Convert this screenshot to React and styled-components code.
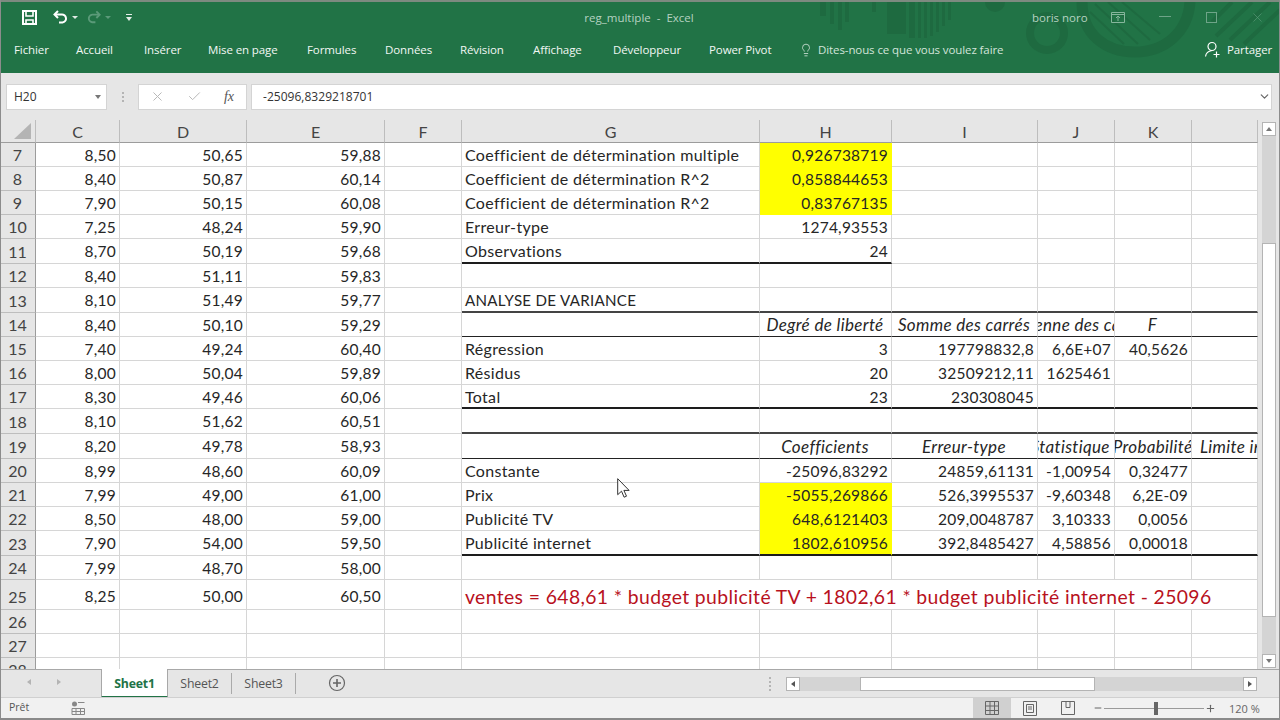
import React from 'react';
import styled, { createGlobalStyle } from 'styled-components';
import { Lightbulb, X, Check, ChevronDown, Plus, Minus } from 'lucide-react';

const Global = createGlobalStyle`
  html, body { margin: 0; padding: 0; background: #e6e6e6; }
  #root { width: 1280px; height: 720px; overflow: hidden; }
  * { box-sizing: border-box; }
`;

const UI = `"Open Sans", "Noto Sans", "Liberation Sans", sans-serif`;
const SHEET = `Lato, "Open Sans", "Liberation Sans", sans-serif`;
const COLS = '36px 84px 127px 138px 77px 298px 132px 146px 77px 77px 66px';

const Page = styled.div`
  position: relative; width: 1280px; height: 720px; display: flex; flex-direction: column;
  background: #e6e6e6; overflow: hidden; border-left: 1px solid #8c8c8c; border-right: 1px solid #8c8c8c;
  border-bottom: 2px solid #8a8a8a; font-family: ${UI};
`;
const Ribbon = styled.header`
  position: relative; height: 73px; flex: none; background: #217346; color: #fff;
  border-top: 2px solid #7d8a80; margin-left: -1px; overflow: hidden;
`;
const Art = styled.svg`position: absolute; left: 0; top: 0; pointer-events: none;`;
const TitleRow = styled.div`
  position: relative; height: 30px; display: flex; align-items: center; padding-left: 21px;
`;
const Quick = styled.div`display: flex; align-items: center; width: 493px; flex: none;`;
const QuickIcon = styled.svg`display: block; flex: none; margin-right: ${p => p.$mr || 0}px;`;
const DocTitle = styled.div`
  width: 250px; flex: none; text-align: center; font-size: 11.5px; color: #b5d2c1; white-space: nowrap;
`;
const User = styled.div`
  margin-left: 268px; font-size: 11.5px; color: #b5d2c1; white-space: nowrap; width: 72px; flex: none;
`;
const WinButtons = styled.div`display: flex; align-items: center; flex: none; color: #6ea488;`;
const WinBtn = styled.div`width: ${p => p.$w}px; flex: none; display: flex; justify-content: center; align-items: center;`;
const TabRow = styled.nav`
  position: relative; height: 41px; padding: 0 0 6px 14px; display: flex; align-items: center;
`;
const Tab = styled.div`
  width: ${p => p.$w}px; flex: none; font-size: 11.5px; letter-spacing: -0.1px; color: #f2f7f4; white-space: nowrap;
`;
const Tell = styled.div`
  display: flex; align-items: center; gap: 5px; width: 405px; flex: none; font-size: 11.5px; letter-spacing: -0.1px;
  color: #d3e4da; margin-left: -2px; white-space: nowrap;
`;
const Share = styled.div`
  display: flex; align-items: center; gap: 6px; font-size: 11.5px; letter-spacing: -0.1px; color: #f2f7f4; flex: none;
`;

const FormulaBar = styled.div`
  height: 47px; flex: none; display: flex; align-items: center; padding: 1px 7px 1px 5px; background: #e6e6e6;
`;
const NameBox = styled.div`
  width: 101px; height: 26px; flex: none; background: #fff; border: 1px solid #d4d4d4; display: flex;
  align-items: center; justify-content: space-between; padding: 0 5px 0 7px; font-size: 12px; color: #333;
`;
const Caret = styled.span`
  width: 0; height: 0; border-left: 3.5px solid transparent; border-right: 3.5px solid transparent;
  border-top: 4px solid #777;
`;
const Grip = styled.div`
  width: 31px; flex: none; display: flex; flex-direction: column; align-items: center; gap: 2px;
`;
const GripDot = styled.span`width: 2px; height: 2px; background: #b4b4b4;`;
const FxBox = styled.div`
  width: 109px; height: 26px; flex: none; background: #fff; border: 1px solid #d4d4d4; display: flex;
  align-items: center; justify-content: space-between; padding: 0 12px 0 11px; color: #b9b9b9;
`;
const FxLabel = styled.span`
  font-family: "Liberation Serif", serif; font-style: italic; font-size: 14px; color: #555;
`;
const Input = styled.div`
  flex: 1; height: 26px; margin-left: 4px; background: #fff; border: 1px solid #d4d4d4; display: flex;
  align-items: center; justify-content: space-between; padding: 0 0 0 11px; font-size: 12px; letter-spacing: 0.03px; color: #333;
`;

const Workspace = styled.div`height: 549px; flex: none; display: flex; margin-left: -1px;`;
const Sheet = styled.div`width: 1258px; flex: none; height: 549px; overflow: hidden; background: #fff;`;
const Row = styled.div`
  display: grid; grid-template-columns: ${COLS}; height: ${p => p.$h}px;
`;
const ColHead = styled.div`
  background: #e6e6e6; border-right: 1px solid #bdbdbd; border-bottom: 1px solid #9c9c9c;
  display: flex; align-items: center; justify-content: center; font: 400 16px ${SHEET}; color: #444; position: relative;
`;
const Corner = styled.svg`position: absolute; right: 4px; bottom: 3px;`;
const RowHead = styled.div`
  background: #e6e6e6; border-right: 1px solid #9c9c9c; border-bottom: 1px solid #bdbdbd;
  display: flex; align-items: center; justify-content: center; padding-top: ${p => p.$low ? 3 : 0}px;
  font: 400 16px ${SHEET}; color: #444;
`;
const lines = {
  thin: '1px solid #222',
  thick: '2px solid #1d1d1d',
  heavy: '2px solid #1d1d1d',
  soft: '2px solid #444',
};
const Cell = styled.div`
  min-width: 0; overflow: hidden; white-space: nowrap; display: flex; align-items: center;
  justify-content: ${p => p.$align === 'right' ? 'flex-end' : p.$align === 'center' ? 'center' : 'flex-start'};
  padding: ${p => p.$low ? 3 : (p.$edge === 'heavy' || p.$edge === 'soft') ? 1 : 0}px ${p => p.$align === 'center' ? 4 : 3}px 0 ${p => p.$pl ?? 3}px;
  font: ${p => p.$italic ? 'italic' : 'normal'} 400 ${p => p.$size || 15.5}px ${SHEET};
  letter-spacing: ${p => p.$size ? '0.02em' : '0.015em'};
  color: ${p => p.$color || '#262626'};
  background: ${p => p.$fill || '#fff'};
  border-right: 1px solid ${p => p.$fill || '#d6d6d6'};
  border-bottom: ${p => p.$edge ? lines[p.$edge] : `1px solid ${p.$fill || '#d6d6d6'}`};
  grid-column: ${p => p.$span ? `span ${p.$span}` : 'auto'};
`;
const Inner = styled.span`flex: none;`;

const VScroll = styled.div`
  width: 21px; height: 549px; flex: none; padding: 2px 3px 1px 4px; background: #e6e6e6; display: flex; flex-direction: column;
`;
const Track = styled.div`flex: 1; background: #d4d4d4; display: flex; flex-direction: column;`;
const ArrowBtn = styled.div`
  width: 14px; height: 14px; flex: none; margin-top: ${p => p.$mt || 0}px; background: #fff; border: 1px solid #b4b4b4;
  display: flex; align-items: center; justify-content: center;
`;
const ArrowUp = styled.span`
  width: 0; height: 0; border-left: 3.5px solid transparent; border-right: 3.5px solid transparent;
  ${p => p.$down ? 'border-top: 4px solid #777;' : 'border-bottom: 4px solid #777;'}
`;
const ArrowSide = styled.span`
  width: 0; height: 0; border-top: 3.5px solid transparent; border-bottom: 3.5px solid transparent;
  ${p => p.$right ? 'border-left: 4px solid #555;' : 'border-right: 4px solid #555;'}
`;
const VThumbGap = styled.div`height: ${p => p.$h}px; flex: none;`;
const VThumb = styled.div`height: 374px; flex: none; background: #fff; border: 1px solid #b4b4b4;`;

const TabBar = styled.div`
  height: 28px; flex: none; display: flex; align-items: flex-start; background: #e6e6e6; border-top: 1px solid #a8a8a8;
  font-size: 12.3px; margin-left: -1px; padding-left: 27px;
`;
const NavArrow = styled.div`width: 30px; height: 24px; flex: none; display: flex; align-items: center; opacity: .35;`;
const TabGap = styled.div`width: 14px; flex: none;`;
const SheetTab = styled.div`
  width: ${p => p.$w}px; flex: none; display: flex; align-items: center; justify-content: center;
  margin-top: ${p => p.$active ? -1 : 3}px; ${p => p.$active ? 'padding-top: 1px; height: 29px;' : 'height: 21px;'}
  background: ${p => p.$active ? '#fff' : 'transparent'};
  color: ${p => p.$active ? '#217346' : '#555'}; font-weight: ${p => p.$active ? 700 : 400};
  border-left: ${p => p.$active ? '1px solid #a8a8a8' : '0'};
  border-right: 1px solid ${p => p.$active ? '#a8a8a8' : '#aaa'};
  border-bottom: ${p => p.$active ? '2px solid #217346' : '0'};
  letter-spacing: -0.2px;
`;
const AddSheet = styled.svg`margin: 4px 0 0 32px; flex: none;`;
const HDots = styled.div`
  margin: 7px 0 0 423px; width: 17px; flex: none; display: flex; flex-direction: column; gap: 2px; align-items: flex-start;
`;
const HTrack = styled.div`
  margin-top: 7px; width: 443px; height: 14px; flex: none; display: flex; background: #d4d4d4;
`;
const HThumb = styled.div`width: 235px; height: 14px; flex: none; margin-left: 60px; background: #fff; border: 1px solid #b4b4b4;`;

const Status = styled.footer`
  height: 21px; flex: none; display: flex; align-items: stretch; background: #f1f1f1; border-top: 1px solid #d0d0d0;
  font-size: 10.5px; color: #555; padding-left: 8px;
`;
const Ready = styled.div`width: 62px; flex: none; display: flex; align-items: center; padding-bottom: 2px;`;
const StatIcon = styled.svg`flex: none; align-self: center; margin-bottom: 1px;`;
const Views = styled.div`margin-left: 888px; display: flex; flex: none;`;
const View = styled.div`
  width: 38px; display: flex; align-items: center; justify-content: center; background: ${p => p.$on ? '#d0d0d0' : 'transparent'};
`;
const Zoomer = styled.div`display: flex; align-items: center; color: #666; flex: none; margin-left: 6px;`;
const Slider = styled.div`position: relative; width: 100px; height: 1px; background: #9a9a9a; margin: 0 1px;`;
const Knob = styled.span`position: absolute; left: 50px; top: -6px; width: 4px; height: 13px; background: #666;`;
const ZoomPct = styled.div`margin-left: 13px; white-space: nowrap; font-size: 11px;`;

const Cursor = styled.svg`position: absolute; left: 616px; top: 478px;`;

const Y = '#ffff00';
const rows = [
  [7, 24, '8,50', '50,65', '59,88', 'Coefficient de détermination multiple', '0,926738719', Y],
  [8, 24, '8,40', '50,87', '60,14', 'Coefficient de détermination R^2', '0,858844653', Y],
  [9, 24, '7,90', '50,15', '60,08', 'Coefficient de détermination R^2', '0,83767135', Y],
  [10, 24, '7,25', '48,24', '59,90', 'Erreur-type', '1274,93553'],
  [11, 25, '8,70', '50,19', '59,68', 'Observations', '24', null, 'gh'],
  [12, 24, '8,40', '51,11', '59,83'],
  [13, 25, '8,10', '51,49', '59,77', 'ANALYSE DE VARIANCE', '', null, 'all', 'soft'],
  [14, 24, '8,40', '50,10', '59,29', '', 'Degré de liberté', null, 'all', 'thin', ['Somme des carrés', 'Moyenne des carrés', 'F', ''], true],
  [15, 24, '7,40', '49,24', '60,40', 'Régression', '3', null, null, null, ['197798832,8', '6,6E+07', '40,5626', '']],
  [16, 24, '8,00', '50,04', '59,89', 'Résidus', '20', null, null, null, ['32509212,11', '1625461', '', '']],
  [17, 24, '8,30', '49,46', '60,06', 'Total', '23', null, 'all', 'heavy', ['230308045', '', '', '']],
  [18, 25, '8,10', '51,62', '60,51', '', '', null, 'all', 'soft'],
  [19, 25, '8,20', '49,78', '58,93', '', 'Coefficients', null, 'all', 'thin', ['Erreur-type', 'Statistique t', 'Probabilité', 'Limite inférieure'], true],
  [20, 24, '8,99', '48,60', '60,09', 'Constante', '-25096,83292', null, null, null, ['24859,61131', '-1,00954', '0,32477', '']],
  [21, 24, '7,99', '49,00', '61,00', 'Prix', '-5055,269866', Y, null, null, ['526,3995537', '-9,60348', '6,2E-09', '']],
  [22, 24, '8,50', '48,00', '59,00', 'Publicité TV', '648,6121403', Y, null, null, ['209,0048787', '3,10333', '0,0056', '']],
  [23, 25, '7,90', '54,00', '59,50', 'Publicité internet', '1802,610956', Y, 'all', 'thick', ['392,8485427', '4,58856', '0,00018', '']],
  [24, 24, '7,99', '48,70', '58,00'],
];

function DataRow({ r }) {
  const [n, h, c, d, e, g = '', hv = '', fill, scope, kind = 'thick', rest = ['', '', '', ''], head] = r;
  const edge = scope ? kind : undefined;
  const headSize = head ? 17 : undefined;
  return (
    <Row $h={h}>
      <RowHead>{n}</RowHead>
      <Cell $align="right">{c}</Cell>
      <Cell $align="right">{d}</Cell>
      <Cell $align="right">{e}</Cell>
      <Cell />
      <Cell $edge={edge} $size={g === 'ANALYSE DE VARIANCE' ? 15.1 : 16}>{g}</Cell>
      <Cell $align={head ? 'center' : 'right'} $italic={head} $size={headSize} $fill={fill} $edge={edge}><Inner>{hv}</Inner></Cell>
      {rest.map((v, i) => {
        const e2 = scope === 'all' ? kind : undefined;
        if (head && i === 3) {
          return <Cell key={i} $italic $size={headSize} $pl={8} $edge={e2}><Inner>{v}</Inner></Cell>;
        }
        return (
          <Cell key={i} $align={head ? 'center' : 'right'} $italic={head} $size={headSize} $edge={e2}><Inner>{v}</Inner></Cell>
        );
      })}
    </Row>
  );
}

function EmptyRow({ n }) {
  return (
    <Row $h={24}>
      <RowHead>{n}</RowHead>
      {Array.from({ length: 10 }).map((_, i) => <Cell key={i} />)}
    </Row>
  );
}

const tabs = [['Fichier', 62], ['Accueil', 68], ['Insérer', 64], ['Mise en page', 99], ['Formules', 78], ['Données', 75], ['Révision', 73], ['Affichage', 80], ['Développeur', 96], ['Power Pivot', 92]];

export default function App() {
  return (
    <>
      <Global />
      <Page>
        <Ribbon>
          <Art width="1280" height="71" viewBox="0 0 1280 71" fill="none">
            <g fill="#1e6a40">
              <rect x="820" y="0" width="6" height="14" /><rect x="830" y="0" width="4" height="22" />
              <rect x="838" y="0" width="4" height="28" /><rect x="845" y="0" width="4" height="20" />
              <rect x="872" y="0" width="4" height="10" />
              <rect x="887" y="0" width="19" height="32" /><rect x="909" y="0" width="6" height="36" />
              <rect x="918" y="0" width="3" height="36" /><rect x="924" y="0" width="3" height="36" />
              <rect x="930" y="0" width="3" height="34" /><rect x="936" y="0" width="3" height="30" />
              <rect x="942" y="0" width="3" height="24" /><rect x="948" y="0" width="3" height="18" />
              <path d="M985 0h20a10 10 0 0 1-20 0z" />
            </g>
            <g stroke="#1e6a40" fill="none">
              <circle cx="1047" cy="31" r="17" strokeWidth="8" />
              <path d="M1082 0 C1082 32 1105 50 1135 50 C1165 50 1188 30 1190 0" strokeWidth="11" />
              <path d="M1095 2 L1138 42 M1108 0 L1150 38 M1122 0 L1160 32 M1090 10 L1124 42" strokeWidth="2" />
              <path d="M1212 20 L1232 0 M1216 34 L1252 0 M1230 38 L1270 0 M1244 42 L1280 8" strokeWidth="4" />
            </g>
          </Art>
          <TitleRow>
            <Quick>
              <QuickIcon $mr={14} width="17" height="17" viewBox="0 0 17 17" fill="none" stroke="#fff" strokeWidth="2">
                <path d="M2 2h13v13H2z" /><path d="M5 2v5h7V2" strokeWidth="1.6" /><path d="M5 15v-4h7v4" strokeWidth="1.6" />
              </QuickIcon>
              <QuickIcon $mr={3} width="17" height="17" viewBox="0 0 17 17" fill="none" stroke="#fff" strokeWidth="2">
                <path d="M6 2 2.500 5.500 6 9" /><path d="M3 5.500h6.500a4 4 0 0 1 1 8H7" />
              </QuickIcon>
              <QuickIcon $mr={7} width="7" height="5" viewBox="0 0 7 5"><path d="M0 1h6L3 4z" fill="#dfeae4" /></QuickIcon>
              <QuickIcon $mr={3} width="16" height="17" viewBox="0 0 17 17" fill="none" stroke="#5b9a79" strokeWidth="2">
                <path d="M11 2l3.500 3.500L11 9" /><path d="M14 5.500H7.500a4 4 0 0 0-1 8H10" />
              </QuickIcon>
              <QuickIcon $mr={13} width="7" height="5" viewBox="0 0 7 5"><path d="M0 1h6L3 4z" fill="#5b9a79" /></QuickIcon>
              <QuickIcon width="8" height="9" viewBox="0 0 8 9"><path d="M1 1h6v1H1zM1 4h6L4 8z" fill="#e4eee8" /></QuickIcon>
            </Quick>
            <DocTitle>reg_multiple&nbsp; -&nbsp; Excel</DocTitle>
            <User>boris noro</User>
            <WinButtons>
              <WinBtn $w={28}>
                <svg width="14" height="11" viewBox="0 0 14 11" fill="none" stroke="#86b69c"><path d="M.5.5h13v10H.5zM.5 2.500h13M7 9V4.500M5 6l2-2 2 2" /></svg>
              </WinBtn>
              <WinBtn $w={66}><svg width="12" height="2"><rect width="12" height="1" y="0" fill="#6ea488" /></svg></WinBtn>
              <WinBtn $w={26}><svg width="11" height="11" fill="none" stroke="#6ea488"><rect x=".5" y=".5" width="10" height="10" /></svg></WinBtn>
              <WinBtn $w={66}><X size={15} strokeWidth={1} color="#5f9a7b" /></WinBtn>
            </WinButtons>
          </TitleRow>
          <TabRow>
            {tabs.map(([t, w]) => <Tab key={t} $w={w}>{t}</Tab>)}
            <Tell>
              <Lightbulb size={14} strokeWidth={1.4} />
              Dites-nous ce que vous voulez faire
            </Tell>
            <Share>
              <svg width="17" height="17" viewBox="0 0 17 17" fill="none" stroke="#fff" strokeWidth="1.2">
                <circle cx="8" cy="5.500" r="4" /><path d="M1.500 15.500c.5-3.500 3-5.500 6.500-6" /><path d="M9.500 13.500h6M12.500 10.500v6" />
              </svg>
              Partager
            </Share>
          </TabRow>
        </Ribbon>

        <FormulaBar>
          <NameBox>H20<Caret /></NameBox>
          <Grip><GripDot /><GripDot /><GripDot /></Grip>
          <FxBox>
            <X size={15} strokeWidth={1.6} />
            <Check size={15} strokeWidth={1.6} />
            <FxLabel>fx</FxLabel>
          </FxBox>
          <Input>
            -25096,8329218701
            <ChevronDown size={13} strokeWidth={2.2} color="#666" />
          </Input>
        </FormulaBar>

        <Workspace>
          <Sheet>
            <Row $h={23}>
              <ColHead>
                <Corner width="17" height="16" viewBox="0 0 17 16"><path d="M17 0v16H0z" fill="#b4b4b4" /></Corner>
              </ColHead>
              {['C', 'D', 'E', 'F', 'G', 'H', 'I', 'J', 'K', ''].map((c, i) => <ColHead key={i}>{c}</ColHead>)}
            </Row>
            {rows.map(r => <DataRow key={r[0]} r={r} />)}
            <Row $h={30}>
              <RowHead $low>25</RowHead>
              <Cell $low $align="right">8,25</Cell>
              <Cell $low $align="right">50,00</Cell>
              <Cell $low $align="right">60,50</Cell>
              <Cell />
              <Cell $low $span={6} $size={19.35} $color="#b8111d">ventes = 648,61 * budget publicité TV + 1802,61 * budget publicité internet - 25096</Cell>
            </Row>
            <EmptyRow n={26} />
            <EmptyRow n={27} />
            <EmptyRow n={28} />
          </Sheet>
          <VScroll>
            <ArrowBtn><ArrowUp /></ArrowBtn>
            <Track>
              <VThumbGap $h={107} />
              <VThumb />
            </Track>
            <ArrowBtn><ArrowUp $down /></ArrowBtn>
          </VScroll>
        </Workspace>

        <TabBar>
          <NavArrow><ArrowSide /></NavArrow>
          <NavArrow><ArrowSide $right /></NavArrow>
          <TabGap />
          <SheetTab $active $w={67}>Sheet1</SheetTab>
          <SheetTab $w={64}>Sheet2</SheetTab>
          <SheetTab $w={64}>Sheet3</SheetTab>
          <AddSheet width="18" height="18" viewBox="0 0 18 18" fill="none" stroke="#666" strokeWidth="1.2">
            <circle cx="9" cy="9" r="7.500" /><path d="M9 5v8M5 9h8" strokeWidth="1.6" />
          </AddSheet>
          <HDots><GripDot /><GripDot /><GripDot /><GripDot /></HDots>
          <ArrowBtn $mt={7}><ArrowSide /></ArrowBtn>
          <HTrack><HThumb /></HTrack>
          <ArrowBtn $mt={7}><ArrowSide $right /></ArrowBtn>
        </TabBar>

        <Status>
          <Ready>Prêt</Ready>
          <StatIcon width="14" height="14" viewBox="0 0 14 14" fill="none" stroke="#888">
            <circle cx="3.500" cy="3" r="2.500" fill="#888" stroke="none" /><path d="M7 1.500h6.500M1 7.500h12.500v6H1zM1 10.500h12.500M5 7.500v6M9.500 7.500v6" />
          </StatIcon>
          <Views>
            <View $on>
              <svg width="14" height="14" viewBox="0 0 14 14" fill="none" stroke="#666"><path d="M.5.5h13v13H.5zM.5 5h13M.5 9.500h13M5 .5v13M9.500.5v13" /></svg>
            </View>
            <View>
              <svg width="14" height="15" viewBox="0 0 14 15" fill="none" stroke="#666"><path d="M.5.5h13v14H.5zM3.500 3.500h7v8h-7zM5 6h4M5 8h4" /></svg>
            </View>
            <View>
              <svg width="14" height="14" viewBox="0 0 14 14" fill="none" stroke="#666"><path d="M.5.5h13v13H.5zM5 .5v6h4v-6" /></svg>
            </View>
          </Views>
          <Zoomer>
            <Minus size={10} strokeWidth={2.4} />
            <Slider><Knob /></Slider>
            <Plus size={11} strokeWidth={2.4} />
            <ZoomPct>120 %</ZoomPct>
          </Zoomer>
        </Status>

        <Cursor width="13" height="21" viewBox="0 0 13 21">
          <path d="M.7.7v16l3.800-3.500 2.600 6 2.400-1-2.600-5.800h5.200z" fill="#fff" stroke="#333" strokeWidth="1" />
        </Cursor>
      </Page>
    </>
  );
}
